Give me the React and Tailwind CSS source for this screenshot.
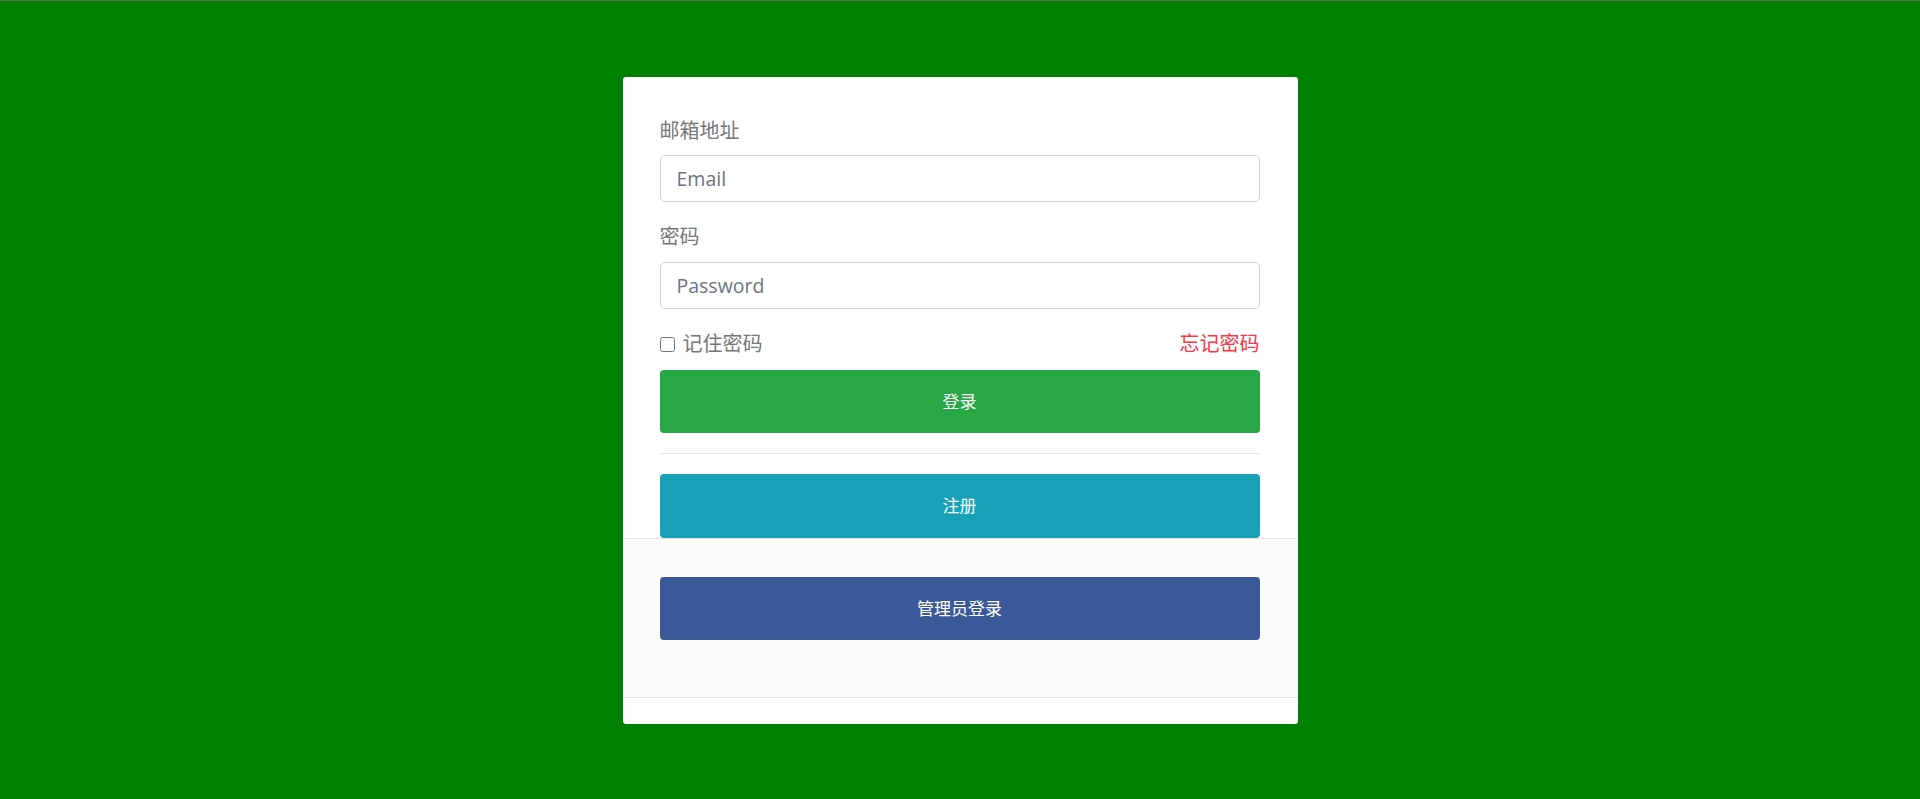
import { useState } from 'react'

const font = { fontFamily: '"Open Sans", "Noto Sans CJK SC", sans-serif' }

export default function App() {
  const [email, setEmail] = useState('')
  const [password, setPassword] = useState('')
  const [remember, setRemember] = useState(false)

  return (
    <div className="min-h-screen h-[799px] bg-[#008000]" style={font}>
      <div className="h-px bg-[#5f6b5f]" />
      <div className="mx-auto mt-[76px] w-[675px] rounded-[3px] bg-white pb-[26px]">
        {/* Login form */}
        <div className="pl-[37px] pr-[38px] pt-[39px]">
          <label className="block h-[30px] text-[20px] leading-[30px] text-[#777]">邮箱地址</label>
          <input
            type="email"
            value={email}
            onChange={(e) => setEmail(e.target.value)}
            placeholder="Email"
            className="mt-[9px] block h-[47px] w-full rounded-[5px] border border-[#ced4da] px-[16px] text-[19.5px] text-[#495057] placeholder:text-[#6c757d] focus:outline-none"
          />

          <label className="mt-[20px] block h-[30px] text-[20px] leading-[30px] text-[#777]">密码</label>
          <input
            type="password"
            value={password}
            onChange={(e) => setPassword(e.target.value)}
            placeholder="Password"
            className="mt-[10px] block h-[47px] w-full rounded-[5px] border border-[#ced4da] px-[16px] text-[19.5px] text-[#495057] placeholder:text-[#6c757d] focus:outline-none"
          />

          <div className="mt-[20px] flex h-[30px] items-center justify-between text-[20px] leading-[30px]">
            <label className="flex items-center text-[#777]">
              <input
                type="checkbox"
                checked={remember}
                onChange={(e) => setRemember(e.target.checked)}
                className="mr-[8px] h-[15px] w-[15px]"
              />
              记住密码
            </label>
            <a href="#" className="text-[#ff3347]">忘记密码</a>
          </div>

          <button className="mt-[11px] block h-[63px] w-full rounded-[4px] bg-[#28a745] text-[17px] text-white">
            登录
          </button>

          <div className="mt-[20px] h-px bg-[#e6e6e6]" />

          <button className="mt-[20px] block h-[64px] w-full rounded-[4px] bg-[#17a2b8] text-[17px] text-white">
            注册
          </button>
        </div>

        {/* Admin footer */}
        <div className="border-y border-[#e6e6e6] bg-[#fbfbfb] pl-[37px] pr-[38px] pt-[38px] pb-[57px]">
          <button className="block h-[63px] w-full rounded-[4px] bg-[#3b5998] text-[17px] text-white">
            管理员登录
          </button>
        </div>
      </div>
    </div>
  )
}
